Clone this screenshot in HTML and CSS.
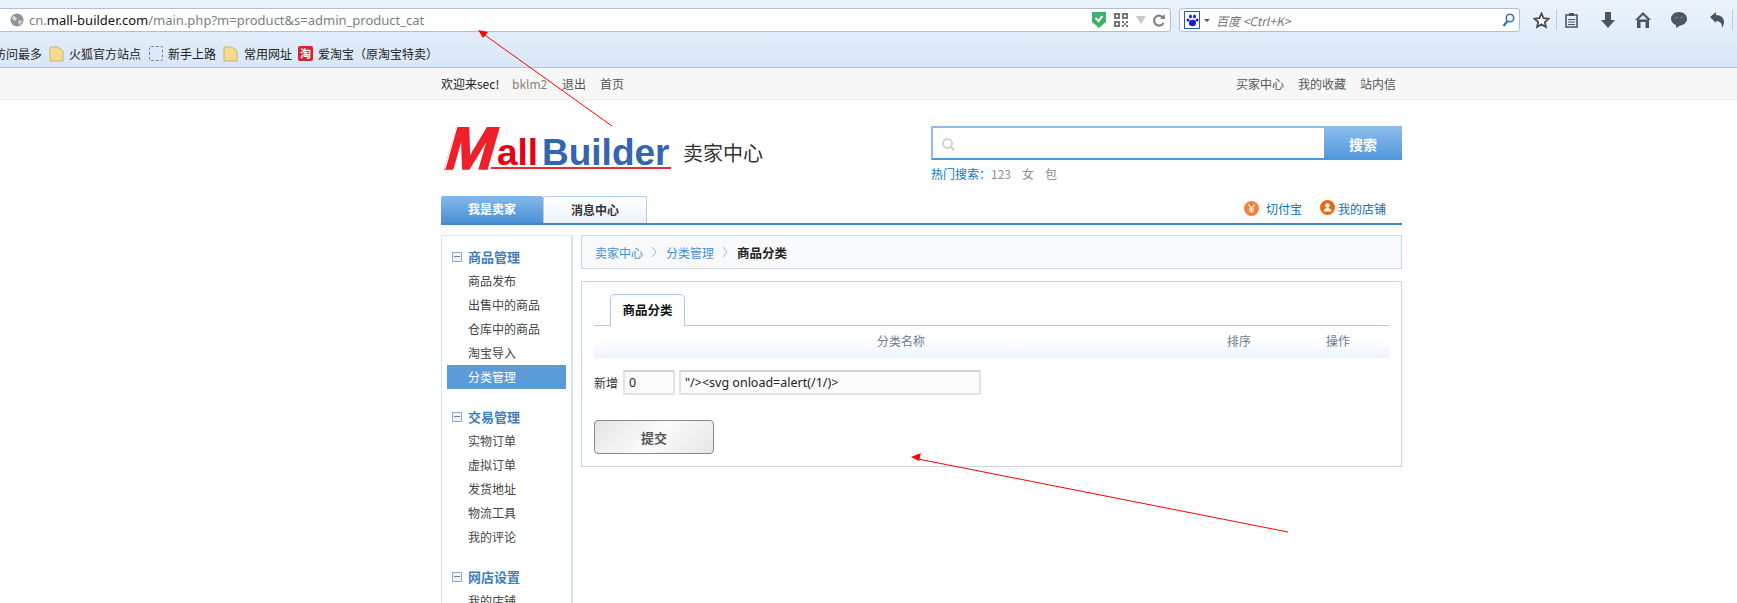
FILE: index.html
```html
<!DOCTYPE html>
<html lang="zh-CN">
<head>
    <meta charset="UTF-8">
    <title>商品分类 - 卖家中心</title>
    <link rel="stylesheet" href="styles.css">
</head>
<body>
    <!-- browser toolbar -->
    <div class="chrome">
        <div class="nav-row">
            <div class="url-bar">
                <svg class="globe" width="14" height="14" viewBox="0 0 14 14"><circle cx="7" cy="7" r="6.500" fill="#8f9499"/><path d="M3 3l3 1 1 2-2 2-3-2zM8 8l3-1 1 2-3 3z" fill="#d5d8db"/></svg>
                <span class="url"><span class="url-dim">cn.</span><span class="url-host">mall-builder.com</span><span class="url-dim">/main.php?m=product&amp;s=admin_product_cat</span></span>
                <svg class="shield" width="14" height="18" viewBox="0 0 14 18"><path d="M0 1h14v10l-7 6-7-6z" fill="#41b06a"/><path d="M3.500 7l3 3 4-5" fill="none" stroke="#fff" stroke-width="2"/></svg>
                <svg class="qr" width="14" height="14" viewBox="0 0 14 14"><path d="M0 0h6v6H0zM8 0h6v6H8zM0 8h6v6H0zM8 8h2v2H8zM12 8h2v2h-2zM10 10h2v2h-2zM8 12h2v2H8zM12 12h2v2h-2z" fill="#777"/><path d="M2 2h2v2H2zM10 2h2v2h-2zM2 10h2v2H2z" fill="#fff"/></svg>
                <svg class="drop" width="10" height="8" viewBox="0 0 10 8"><path d="M0 0h10L5 8z" fill="#c4c9ce"/></svg>
                <svg class="reload" width="12" height="13" viewBox="0 0 12 13"><path d="M10 3.500A5 5 0 1 0 10.500 9" fill="none" stroke="#7d8287" stroke-width="2.200"/><path d="M7 5h5V0z" fill="#7d8287"/></svg>
            </div>
            <div class="search-bar">
                <span class="engine"><svg width="13" height="13" viewBox="0 0 13 13"><g fill="#1a1ae0"><ellipse cx="6.500" cy="9" rx="3.500" ry="3.200"/><circle cx="2" cy="6" r="1.500"/><circle cx="11" cy="6" r="1.500"/><ellipse cx="4.500" cy="2.500" rx="1.400" ry="2"/><ellipse cx="8.500" cy="2.500" rx="1.400" ry="2"/></g></svg></span>
                <svg class="engine-drop" width="6" height="3" viewBox="0 0 6 3"><path d="M0 0h6L3 3z" fill="#555"/></svg>
                <span class="search-hint">百度 &lt;Ctrl+K&gt;</span>
                <svg class="search-go" width="13" height="14" viewBox="0 0 13 14"><circle cx="8" cy="5" r="3.700" fill="none" stroke="#2e76b8" stroke-width="1.600"/><path d="M5.500 8L1.500 13" stroke="#2e76b8" stroke-width="2.200"/></svg>
            </div>
            <div class="tool-icons">
                <svg class="tool-star" width="17" height="17" viewBox="0 0 17 17"><path d="M8.500 1.500l2.100 4.700 5 .5-3.800 3.300 1.100 5-4.400-2.600-4.400 2.600 1.100-5L1.400 6.700l5-.5z" fill="#fff" stroke="#454d56" stroke-width="1.800"/></svg>
                <span class="tool-sep"></span>
                <svg class="tool-list" width="13" height="16" viewBox="0 0 13 16"><path d="M1 3h11v12H1z" fill="none" stroke="#4b5560" stroke-width="1.600"/><path d="M4 1h5v3H4zM3 7h7v1H3zM3 9.500h7v1H3zM3 12h7v1H3z" fill="#4b5560"/></svg>
                <svg class="tool-down" width="14" height="16" viewBox="0 0 14 16"><path d="M4 0h6v8h4l-7 8-7-8h4z" fill="#4b5560"/></svg>
                <svg class="tool-home" width="16" height="16" viewBox="0 0 16 16"><path d="M8 0l8 8h-2v8h-3.500v-6h-5v6H2V8H0z" fill="#4b5560"/><path d="M8 3L3.500 7.500h9z" fill="#d9e7f7"/></svg>
                <svg class="tool-chat" width="16" height="16" viewBox="0 0 16 16"><path d="M8 0c4.400 0 8 2.900 8 6.800s-3.600 6.700-7 6.700L5 16v-3C2 12 0 9.800 0 6.800 0 2.900 3.600 0 8 0z" fill="#4b5560"/><path d="M4 5h3v1H4zM9 5h3v1H9z" fill="#7b858f"/></svg>
                <svg class="tool-back" width="14" height="16" viewBox="0 0 14 16"><path d="M0 5l6-5v3c5 0 8 3 8 7 0 2-.7 4-2 6 .3-4-1.500-7-6-7v2z" fill="#4b5560"/></svg>
                <span class="tool-sep"></span>
            </div>
        </div>
        <div class="bookmark-row">
            <span class="bm-first">访问最多</span>
            <svg class="folder" width="15" height="16" viewBox="0 0 15 16"><path d="M1 1h8l5 4v10H1z" fill="#f5dc8c" stroke="#cdb164"/></svg>
            <span class="bm-a">火狐官方站点</span>
            <span class="bm-dash"></span>
            <span class="bm-b">新手上路</span>
            <svg class="folder" width="15" height="16" viewBox="0 0 15 16"><path d="M1 1h8l5 4v10H1z" fill="#f5dc8c" stroke="#cdb164"/></svg>
            <span class="bm-c">常用网址</span>
            <span class="bm-tao">淘</span>
            <span class="bm-d">爱淘宝（原淘宝特卖）</span>
        </div>
    </div>

    <!-- site top bar -->
    <div class="topbar">
        <div class="wrap topbar-inner">
            <div class="topbar-left">
                <span class="welcome">欢迎来sec!</span>
                <a class="gray-link">bklm2</a>
                <a class="top-link">退出</a>
                <a class="top-link">首页</a>
            </div>
            <div class="topbar-right">
                <a class="top-link">买家中心</a>
                <a class="top-link">我的收藏</a>
                <a class="top-link">站内信</a>
            </div>
        </div>
    </div>

    <div class="wrap">
        <div class="head">
            <div class="logo-box">
                <svg class="logo" width="232" height="46" viewBox="0 0 232 46">
                    <text class="logo-m" transform="translate(0 43) skewX(-16)" x="0" y="0" textLength="50" lengthAdjust="spacingAndGlyphs">M</text>
                    <path d="M16 0L4 43" stroke="#fff" stroke-width="1.200"/>
                    <text class="logo-all" x="56" y="39">all</text>
                    <text class="logo-builder" x="101" y="39">Builder</text>
                    <rect x="50" y="41" width="180" height="2" fill="#ee2a35"/>
                </svg>
                <span class="logo-title">卖家中心</span>
            </div>
            <div class="search-box">
                <div class="search-row">
                    <div class="search-input">
                        <svg width="13" height="13" viewBox="0 0 13 13"><circle cx="5.500" cy="5.500" r="4.500" fill="none" stroke="#cfcfcf" stroke-width="1.800"/><path d="M9 9l3 3" stroke="#cfcfcf" stroke-width="2"/></svg>
                    </div>
                    <div class="search-btn">搜索</div>
                </div>
                <div class="hot">
                    <span class="hot-label">热门搜索：</span>
                    <a class="hot-item">123</a>
                    <a class="hot-item">女</a>
                    <a class="hot-item">包</a>
                </div>
            </div>
        </div>

        <div class="tabs">
            <a class="main-tab main-tab-on">我是卖家</a>
            <a class="main-tab">消息中心</a>
            <div class="tab-links">
                <svg width="15" height="15" viewBox="0 0 15 15"><circle cx="7.500" cy="7.500" r="7.500" fill="#f0843c"/><path d="M4.500 3.500l3 4 3-4M7.500 7.500v4.500M5 8h5M5 10h5" fill="none" stroke="#fff" stroke-width="1.100"/></svg>
                <a class="tab-link tab-link-pay">切付宝</a>
                <svg class="shop-icon" width="15" height="15" viewBox="0 0 15 15"><circle cx="7.500" cy="7.500" r="7.500" fill="#e8690f"/><circle cx="7.500" cy="5.500" r="2.300" fill="#fff"/><path d="M3.500 11.500c.5-2.500 2-3.500 4-3.500s3.500 1 4 3.500z" fill="#fff"/></svg>
                <a class="tab-link">我的店铺</a>
            </div>
        </div>

        <div class="layout">
            <div class="side">
                <div class="side-group">
                    <div class="side-head"><span class="minus"></span>商品管理</div>
                    <a class="side-item">商品发布</a>
                    <a class="side-item">出售中的商品</a>
                    <a class="side-item">仓库中的商品</a>
                    <a class="side-item">淘宝导入</a>
                    <a class="side-item side-item-on">分类管理</a>
                </div>
                <div class="side-group">
                    <div class="side-head"><span class="minus"></span>交易管理</div>
                    <a class="side-item">实物订单</a>
                    <a class="side-item">虚拟订单</a>
                    <a class="side-item">发货地址</a>
                    <a class="side-item">物流工具</a>
                    <a class="side-item">我的评论</a>
                </div>
                <div class="side-group">
                    <div class="side-head"><span class="minus"></span>网店设置</div>
                    <a class="side-item">我的店铺</a>
                </div>
            </div>

            <div class="main">
                <div class="crumb">
                    <a class="crumb-link">卖家中心</a>
                    <svg class="crumb-arrow" width="6" height="12" viewBox="0 0 6 12"><path d="M1 1l4 5-4 5" fill="none" stroke="#9dbad6"/></svg>
                    <a class="crumb-link">分类管理</a>
                    <svg class="crumb-arrow" width="6" height="12" viewBox="0 0 6 12"><path d="M1 1l4 5-4 5" fill="none" stroke="#9dbad6"/></svg>
                    <span class="crumb-now">商品分类</span>
                </div>
                <div class="panel">
                    <div class="panel-tabs"><span class="panel-tab">商品分类</span></div>
                    <div class="cat-head">
                        <span class="cat-name">分类名称</span>
                        <span class="cat-sort">排序</span>
                        <span class="cat-op">操作</span>
                    </div>
                    <div class="add-row">
                        <span>新增</span>
                        <input class="field field-num" type="text" value="0">
                        <input class="field field-name" type="text" value="&quot;/&gt;&lt;svg onload=alert(/1/)&gt;">
                    </div>
                    <button class="submit" type="button">提交</button>
                </div>
            </div>
        </div>
    </div>

    <!-- red arrows drawn over the screenshot -->
    <svg class="marks" width="1737" height="603" viewBox="0 0 1737 603">
        <path d="M612 126L482 33" stroke="#f00" fill="none"/>
        <path d="M478 30l10 2-5 6z" fill="#f00"/>
        <path d="M1288 532L918 459" stroke="#f00" fill="none"/>
        <path d="M911 457l10-4-2 8z" fill="#f00"/>
    </svg>
</body>
</html>
```

FILE: styles.css
```css
* {
    box-sizing: border-box;
}

html, body {
    height: 603px;
    overflow: hidden;
}

body {
    margin: 0;
    position: relative;
    background: #fff;
    color: #333;
    font-family: "Noto Sans CJK SC", "Noto Sans", sans-serif;
    font-size: 12px;
}

a {
    color: inherit;
    text-decoration: none;
}

/* browser toolbar */
.chrome {
    height: 68px;
    background: linear-gradient(#ebf3fc, #d8e7f7);
    border-bottom: 1px solid #b3c4da;
    overflow: hidden;
}

.nav-row {
    height: 40px;
    padding-top: 8px;
    display: flex;
    align-items: flex-start;
}

.url-bar {
    flex: none;
    width: 1177px;
    height: 24px;
    margin-left: -6px;
    padding-left: 15px;
    display: flex;
    align-items: center;
    background: #fff;
    border: 1px solid #afc0d6;
    border-radius: 3px;
}

.globe {
    flex: none;
}

.url {
    flex: none;
    width: 1063px;
    margin-left: 5px;
    font-family: "Noto Sans", sans-serif;
    font-size: 13px;
    white-space: nowrap;
}

.url-dim {
    color: #7a7f85;
}

.url-host {
    color: #111;
}

.shield {
    flex: none;
}

.qr {
    flex: none;
    margin-left: 8px;
}

.drop {
    flex: none;
    margin-left: 8px;
}

.reload {
    flex: none;
    margin-left: 7px;
}

.search-bar {
    flex: none;
    width: 341px;
    height: 24px;
    margin-left: 8px;
    padding: 0 4px;
    display: flex;
    align-items: center;
    background: #fff;
    border: 1px solid #afc0d6;
    border-radius: 3px;
}

.engine {
    width: 16px;
    height: 18px;
    display: flex;
    align-items: center;
    justify-content: center;
    border: 1px solid #1a5fb0;
}

.engine-drop {
    margin-left: 4px;
}

.search-hint {
    flex: 1;
    margin-left: 6px;
    color: #777;
    font-style: italic;
    font-size: 12px;
}

.tool-icons {
    display: flex;
    align-items: center;
    height: 24px;
    margin-left: 13px;
}

.tool-sep {
    width: 1px;
    height: 20px;
    background: #bccbde;
}

.tool-star {
    margin-right: 6px;
}

.tool-list {
    margin-left: 8px;
}

.tool-down {
    margin-left: 23px;
}

.tool-home {
    margin-left: 20px;
}

.tool-chat {
    margin-left: 20px;
}

.tool-back {
    margin-left: 23px;
    margin-right: 8px;
}

.bookmark-row {
    height: 27px;
    display: flex;
    align-items: center;
    color: #222;
    white-space: nowrap;
}

.bm-first {
    width: 55px;
    margin-left: -6px;
}

.bm-a {
    width: 80px;
    margin-left: 5px;
}

.bm-dash {
    width: 14px;
    height: 15px;
    border: 1px dashed #7d8794;
    border-radius: 2px;
}

.bm-b {
    width: 55px;
    margin-left: 5px;
}

.bm-c {
    width: 54px;
    margin-left: 6px;
}

.bm-tao {
    width: 15px;
    height: 15px;
    background: #d8232a;
    color: #fff;
    font-size: 11px;
    font-weight: bold;
    line-height: 15px;
    text-align: center;
    border-radius: 2px;
}

.bm-d {
    margin-left: 5px;
}

/* site top bar */
.topbar {
    height: 32px;
    background: #f7f7f7;
    border-bottom: 1px solid #f0f0f0;
}

.wrap {
    width: 961px;
    margin-left: 441px;
}

.topbar-inner {
    height: 31px;
    display: flex;
    align-items: center;
    justify-content: space-between;
}

.topbar-left, .topbar-right {
    display: flex;
    gap: 14px;
    white-space: nowrap;
}

.topbar-right {
    padding-right: 6px;
}

.welcome {
    width: 57px;
    color: #222;
}

.gray-link {
    width: 36px;
    color: #8a8275;
}

.top-link {
    color: #555;
}

/* logo and search */
.head {
    height: 96px;
    display: flex;
    justify-content: space-between;
}

.logo-box {
    display: flex;
    padding-top: 26px;
    align-items: flex-start;
}

.logo {
    overflow: visible;
}

.logo-m {
    font-family: "Liberation Sans", sans-serif;
    font-size: 60px;
    font-weight: bold;
    fill: #ee2029;
    stroke: #ee2029;
    stroke-width: 1.600;
}

.logo-all {
    font-family: "Liberation Sans", sans-serif;
    font-size: 37px;
    font-weight: bold;
    fill: #e60012;
}

.logo-builder {
    font-family: "Liberation Sans", sans-serif;
    font-size: 37px;
    font-weight: bold;
    fill: #3465b0;
}

.logo-title {
    margin: 12px 0 0 10px;
    font-size: 20px;
    line-height: 30px;
    color: #333;
}

.search-box {
    width: 471px;
    padding-top: 26px;
}

.search-row {
    height: 34px;
    display: flex;
}

.search-input {
    width: 393px;
    padding: 9px 0 0 9px;
    background: #fff;
    border: 2px solid;
    border-color: #8bbcec #8bbcec #4f97dd #8bbcec;
    border-right: 0;
}

.search-btn {
    flex: 1;
    background: linear-gradient(#8fbdec, #4e97dc);
    color: #fff;
    font-size: 14px;
    font-weight: bold;
    line-height: 36px;
    text-align: center;
}

.hot {
    margin-top: 5px;
    display: flex;
    line-height: 18px;
}

.hot-label {
    width: 60px;
    color: #0b7bc1;
}

.hot-item {
    margin-right: 11px;
    color: #8d8d8d;
}

/* main tabs */
.tabs {
    height: 29px;
    display: flex;
    border-bottom: 2px solid #3f88cf;
}

.main-tab {
    width: 104px;
    background: linear-gradient(#fff, #edf2fa);
    border: 1px solid #b5cfe8;
    border-bottom: 0;
    border-radius: 2px 2px 0 0;
    color: #333;
    font-weight: bold;
    line-height: 26px;
    text-align: center;
}

.main-tab-on {
    width: 102px;
    background: linear-gradient(#85b9ea, #4a90d6);
    border: 0;
    color: #fff;
}

.tab-links {
    margin-left: auto;
    padding: 5px 16px 0 0;
    display: flex;
    align-items: flex-start;
}

.tab-link {
    margin-left: 3px;
    color: #0b6fb8;
    line-height: 16px;
}

.tab-link-pay {
    margin-left: 7px;
}

.shop-icon {
    margin-left: 18px;
    margin-top: -1px;
}

/* page body */
.layout {
    display: flex;
    align-items: flex-start;
    margin-top: 10px;
}

.side {
    width: 132px;
    height: 420px;
    padding: 8px 5px 0 5px;
    border: 1px solid #d6e4f3;
    border-width: 1px 2px 0 1px;
}

.side-group {
    margin-bottom: 15px;
}

.side-head {
    height: 25px;
    display: flex;
    align-items: center;
    padding-left: 5px;
    color: #3f80b8;
    font-size: 13px;
    font-weight: bold;
}

.minus {
    position: relative;
    width: 10px;
    height: 10px;
    margin-right: 6px;
    border: 1px solid #8eabc6;
    background: #f1f5f9;
}

.minus::after {
    content: "";
    position: absolute;
    left: 1px;
    right: 1px;
    top: 3px;
    height: 1px;
    background: #5e83a6;
}

.side-item {
    display: block;
    height: 24px;
    padding-left: 21px;
    color: #444;
    line-height: 24px;
}

.side-item-on {
    background: #5b9bd9;
    color: #fff;
}

.main {
    width: 821px;
    margin-left: 8px;
}

.crumb {
    height: 34px;
    padding-left: 13px;
    display: flex;
    align-items: center;
    background: #f7f9fb;
    border: 1px solid #c8d8e8;
}

.crumb-link {
    color: #4a90d0;
}

.crumb-arrow {
    margin: 0 9px 0 8px;
}

.crumb-now {
    color: #222;
    font-size: 12.500px;
    font-weight: bold;
}

.panel {
    height: 186px;
    margin-top: 12px;
    padding: 12px 12px 0 12px;
    background: #fff;
    border: 1px solid #c8d8e8;
}

.panel-tabs {
    height: 32px;
    padding-left: 16px;
    border-bottom: 1px solid #a9cdf2;
}

.panel-tab {
    display: block;
    width: 75px;
    height: 32px;
    background: #fff;
    border: 1px solid #a9cdf2;
    border-bottom: 0;
    border-radius: 5px 5px 0 0;
    color: #111;
    font-size: 12.500px;
    font-weight: bold;
    line-height: 30px;
    text-align: center;
}

.cat-head {
    height: 32px;
    display: flex;
    background: linear-gradient(#fff 40%, #edf3fd);
    color: #6b7c93;
    line-height: 30px;
    white-space: nowrap;
}

.cat-name {
    flex: none;
    width: 614px;
    text-align: center;
}

.cat-sort {
    flex: none;
    width: 62px;
    text-align: center;
}

.cat-op {
    flex: none;
    width: 40px;
    margin-left: 48px;
    text-align: center;
}

.add-row {
    margin-top: 12px;
    display: flex;
    align-items: center;
    gap: 4px;
    color: #333;
}

.add-row span {
    margin-right: 1px;
}

.field {
    height: 25px;
    padding: 0 4px;
    background: #fbfbfb;
    border: 2px solid #e2e2e2;
    border-top-color: #d4d4d4;
    color: #222;
    font-family: "Noto Sans", sans-serif;
    font-size: 12.500px;
}

.field-num {
    width: 52px;
}

.field-name {
    width: 302px;
}

.submit {
    display: block;
    width: 120px;
    height: 34px;
    margin-top: 25px;
    background: linear-gradient(135deg, #e4e4e4, #fbfbfb 50%, #e6e6e6);
    border: 1px solid #8a8a8a;
    border-radius: 4px;
    color: #555;
    font-family: inherit;
    font-size: 13px;
    font-weight: bold;
}

.marks {
    position: absolute;
    left: 0;
    top: 0;
    pointer-events: none;
}
```
